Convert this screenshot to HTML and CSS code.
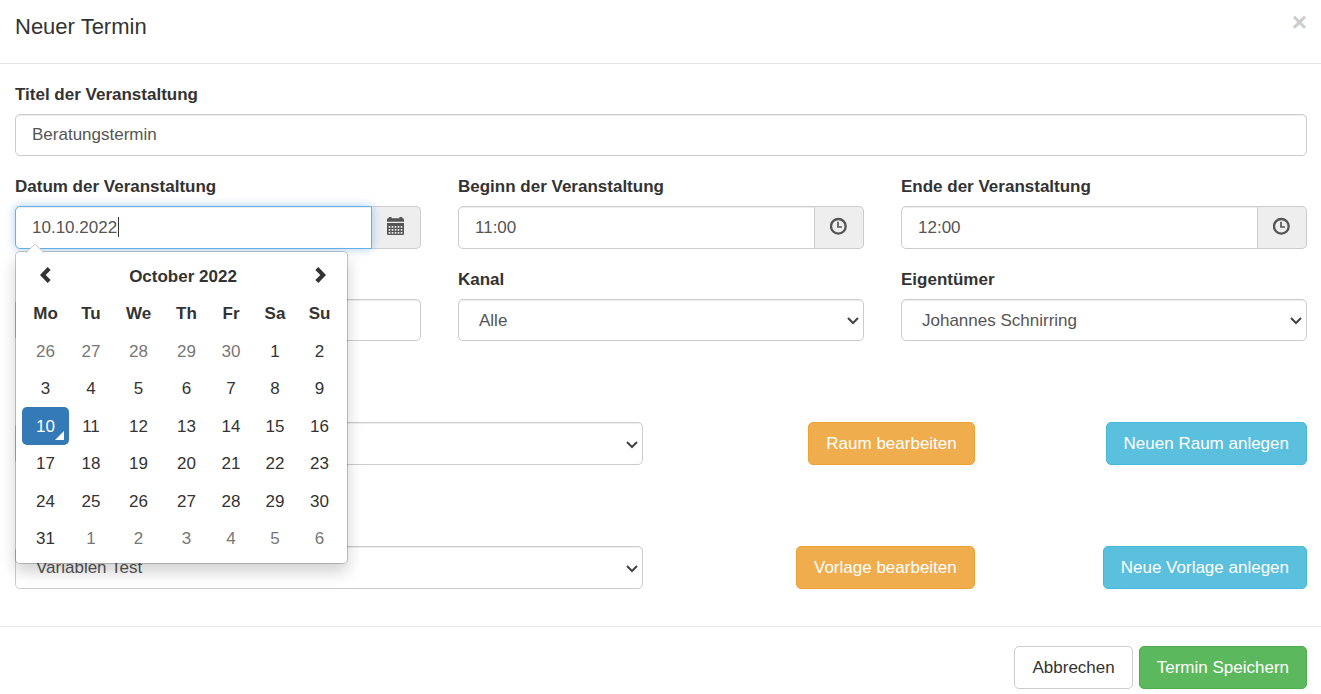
FILE: index.html
```html
<!DOCTYPE html>
<html lang="de">
<head>
<meta charset="utf-8">
<meta name="viewport" content="width=device-width, initial-scale=1">
<title>Neuer Termin</title>
<link rel="stylesheet" href="styles.css">
</head>
<body>
<form class="modal">
  <header class="modal-header">
    <h1 class="modal-title">Neuer Termin</h1>
    <button type="button" class="close" aria-label="Schließen">×</button>
  </header>

  <main class="modal-body">
    <div class="field">
      <label class="label" for="title">Titel der Veranstaltung</label>
      <input class="control" id="title" type="text" value="Beratungstermin">
    </div>

    <div class="row-thirds">
      <div class="field">
        <label class="label" for="date">Datum der Veranstaltung</label>
        <div class="input-group">
          <input class="control control-focus" id="date" type="text" value="10.10.2022">
          <span class="caret"></span>
          <button type="button" class="addon" aria-label="Kalender öffnen">
            <svg class="icon" viewBox="0 0 51 54" aria-hidden="true">
              <path fill="currentColor" fill-rule="evenodd" d="M7 0h5q2 0 2 2v2h23V2q0-2 2-2h5q2 0 2 2v2h1q4 0 4 4v6H0V8q0-4 4-4h1V2q0-2 2-2zM0 18h51v33q0 3-3 3H3q-3 0-3-3zM5 27v5h5v-5zM14 27v5h5v-5zM23 27v5h5v-5zM32 27v5h5v-5zM41 27v5h5v-5zM5 36v5h5v-5zM14 36v5h5v-5zM23 36v5h5v-5zM32 36v5h5v-5zM41 36v5h5v-5zM5 45v5h5v-5zM14 45v5h5v-5zM23 45v5h5v-5zM32 45v5h5v-5zM41 45v5h5v-5z"/>
            </svg>
          </button>

          <div class="datepicker">
            <table class="calendar">
              <colgroup>
                <col class="c-mo"><col class="c-tu"><col class="c-we"><col class="c-th"><col class="c-fr"><col class="c-sa"><col class="c-su">
              </colgroup>
              <tbody>
                <tr>
                  <th><button type="button" class="day" aria-label="Previous Month"><svg class="chevron" viewBox="0 0 36 48" aria-hidden="true"><path fill="currentColor" d="M23 0l9 9-15 15 15 15-9 9L0 24z"/></svg></button></th>
                  <th colspan="5"><button type="button" class="day month">October 2022</button></th>
                  <th><button type="button" class="day" aria-label="Next Month"><svg class="chevron" viewBox="0 0 36 48" aria-hidden="true"><path fill="currentColor" d="M13 0L4 9l15 15L4 39l9 9 23-24z"/></svg></button></th>
                </tr>
                <tr><th>Mo</th><th>Tu</th><th>We</th><th>Th</th><th>Fr</th><th>Sa</th><th>Su</th></tr>
                <tr>
                  <td><button type="button" class="day muted">26</button></td><td><button type="button" class="day muted">27</button></td><td><button type="button" class="day muted">28</button></td><td><button type="button" class="day muted">29</button></td><td><button type="button" class="day muted">30</button></td><td><button type="button" class="day">1</button></td><td><button type="button" class="day">2</button></td>
                </tr>
                <tr>
                  <td><button type="button" class="day">3</button></td><td><button type="button" class="day">4</button></td><td><button type="button" class="day">5</button></td><td><button type="button" class="day">6</button></td><td><button type="button" class="day">7</button></td><td><button type="button" class="day">8</button></td><td><button type="button" class="day">9</button></td>
                </tr>
                <tr>
                  <td><button type="button" class="day active">10</button></td><td><button type="button" class="day">11</button></td><td><button type="button" class="day">12</button></td><td><button type="button" class="day">13</button></td><td><button type="button" class="day">14</button></td><td><button type="button" class="day">15</button></td><td><button type="button" class="day">16</button></td>
                </tr>
                <tr>
                  <td><button type="button" class="day">17</button></td><td><button type="button" class="day">18</button></td><td><button type="button" class="day">19</button></td><td><button type="button" class="day">20</button></td><td><button type="button" class="day">21</button></td><td><button type="button" class="day">22</button></td><td><button type="button" class="day">23</button></td>
                </tr>
                <tr>
                  <td><button type="button" class="day">24</button></td><td><button type="button" class="day">25</button></td><td><button type="button" class="day">26</button></td><td><button type="button" class="day">27</button></td><td><button type="button" class="day">28</button></td><td><button type="button" class="day">29</button></td><td><button type="button" class="day">30</button></td>
                </tr>
                <tr>
                  <td><button type="button" class="day">31</button></td><td><button type="button" class="day muted">1</button></td><td><button type="button" class="day muted">2</button></td><td><button type="button" class="day muted">3</button></td><td><button type="button" class="day muted">4</button></td><td><button type="button" class="day muted">5</button></td><td><button type="button" class="day muted">6</button></td>
                </tr>
              </tbody>
            </table>
          </div>
        </div>
      </div>
      <div class="field">
        <label class="label" for="start">Beginn der Veranstaltung</label>
        <div class="input-group">
          <input class="control" id="start" type="text" value="11:00">
          <button type="button" class="addon" aria-label="Uhrzeit wählen">
            <svg class="icon" viewBox="0 0 51 54" aria-hidden="true"><g fill="none" stroke="currentColor"><circle cx="25" cy="28" r="22" stroke-width="7"/><path stroke-width="5" d="M24 14v16h12"/></g></svg>
          </button>
        </div>
      </div>
      <div class="field">
        <label class="label" for="end">Ende der Veranstaltung</label>
        <div class="input-group">
          <input class="control" id="end" type="text" value="12:00">
          <button type="button" class="addon" aria-label="Uhrzeit wählen">
            <svg class="icon" viewBox="0 0 51 54" aria-hidden="true"><g fill="none" stroke="currentColor"><circle cx="25" cy="28" r="22" stroke-width="7"/><path stroke-width="5" d="M24 14v16h12"/></g></svg>
          </button>
        </div>
      </div>
    </div>

    <div class="row-thirds">
      <div class="field field-end">
        <input class="control" type="text" aria-label="Angabe">
      </div>
      <div class="field">
        <label class="label" for="channel">Kanal</label>
        <select class="control select" id="channel"><option>Alle</option></select>
      </div>
      <div class="field">
        <label class="label" for="owner">Eigentümer</label>
        <select class="control select" id="owner"><option>Johannes Schnirring</option></select>
      </div>
    </div>

    <div class="row-actions">
      <select class="control select wide" aria-label="Raum"><option></option></select>
      <div class="action"><button type="button" class="btn btn-warning">Raum bearbeiten</button></div>
      <div class="action"><button type="button" class="btn btn-info">Neuen Raum anlegen</button></div>
    </div>

    <div class="row-actions">
      <select class="control select wide" aria-label="Vorlage"><option>Variablen Test</option></select>
      <div class="action"><button type="button" class="btn btn-warning">Vorlage bearbeiten</button></div>
      <div class="action"><button type="button" class="btn btn-info">Neue Vorlage anlegen</button></div>
    </div>
  </main>

  <footer class="modal-footer">
    <button type="button" class="btn btn-default">Abbrechen</button>
    <button type="submit" class="btn btn-success">Termin Speichern</button>
  </footer>
</form>
</body>
</html>
```

FILE: styles.css
```css
* {
  box-sizing: border-box;
}

body {
  margin: 0;
  background: #fff;
  color: #333;
  font-family: "Liberation Sans", Arial, sans-serif;
  font-size: 17px;
  line-height: 25px;
}

button,
input,
select {
  margin: 0;
  font: inherit;
}

.modal-header {
  display: flex;
  justify-content: space-between;
  align-items: flex-start;
  padding: 9px 14px 19px 15px;
  border-bottom: 1px solid #e5e5e5;
}

.modal-title {
  margin: 0;
  font-size: 22px;
  font-weight: 400;
  line-height: 35px;
}

.close {
  padding: 0;
  border: 0;
  background: none;
  color: #ccc;
  font-size: 26px;
  font-weight: 700;
  line-height: 26px;
}

.modal-body {
  display: flex;
  flex-direction: column;
  gap: 18px;
  padding: 18px 14px 37px 15px;
}

.row-thirds {
  display: grid;
  grid-template-columns: repeat(3, minmax(0, 1fr));
  gap: 37px;
}

.row-actions {
  display: grid;
  grid-template-columns: repeat(12, minmax(0, 1fr));
  column-gap: 37px;
  padding-top: 63px;
}

.wide {
  grid-column: span 6;
}

.action {
  display: flex;
  grid-column: span 3;
  justify-content: flex-end;
}

.field {
  display: flex;
  flex-direction: column;
  gap: 7px;
}

.field-end {
  justify-content: flex-end;
}

.label {
  font-weight: 700;
}

.control {
  width: 100%;
  min-width: 0;
  height: 42px;
  padding: 0 16px;
  border: 1px solid #ccc;
  border-radius: 5px;
  outline: 0;
  background-color: #fff;
  box-shadow: inset 0 1px 1px rgba(0, 0, 0, 0.075);
  color: #555;
}

.select {
  appearance: none;
  padding: 0 20px;
  background-image: url("data:image/svg+xml,%3Csvg xmlns='http://www.w3.org/2000/svg' viewBox='0 0 12 10'%3E%3Cpath d='M1 3l5 5 5-5' fill='none' stroke='%23444' stroke-width='2'/%3E%3C/svg%3E");
  background-position: right 4px center;
  background-repeat: no-repeat;
  background-size: 12px 10px;
}

.row-actions .control,
.input-group .control {
  height: 43px;
}

.input-group {
  position: relative;
  display: flex;
}

.input-group .control {
  flex: 1;
  border-radius: 5px 0 0 5px;
}

.input-group .control-focus {
  position: relative;
  z-index: 1;
  border-color: #66afe9;
  box-shadow: inset 0 1px 1px rgba(0, 0, 0, 0.075), 0 0 10px rgba(102, 175, 233, 0.6);
}

.caret {
  position: absolute;
  z-index: 2;
  top: 11px;
  left: 103px;
  width: 1px;
  height: 20px;
  background: #333;
}

.addon {
  display: flex;
  justify-content: center;
  align-items: center;
  width: 49px;
  padding: 0 1px 3px 0;
  border: 1px solid #ccc;
  border-left: 0;
  border-radius: 0 5px 5px 0;
  background: #eee;
  color: #555;
}

.icon {
  width: 17px;
  height: 18px;
}

.datepicker {
  position: absolute;
  z-index: 10;
  top: 45px;
  left: 0;
  padding: 5px 5px 6px 6px;
  border: 1px solid #ccc;
  border-color: rgba(0, 0, 0, 0.2);
  border-radius: 5px;
  background: #fff;
  background-clip: padding-box;
  box-shadow: 0 8px 15px rgba(0, 0, 0, 0.175);
}

.datepicker::before {
  content: "";
  position: absolute;
  top: -6px;
  left: 12px;
  width: 12px;
  height: 12px;
  border: 1px solid #ccc;
  background: #fff;
  clip-path: polygon(0 0, 100% 0, 0 100%);
  transform: rotate(45deg);
}

.calendar {
  width: 320px;
  border-collapse: collapse;
  table-layout: fixed;
  text-align: center;
}

.calendar tr {
  height: 37px;
}

.calendar tr:nth-child(odd) {
  height: 38px;
}

.calendar th,
.calendar td {
  height: inherit;
  padding: 0;
}

.c-mo {
  width: 47px;
}

.c-tu,
.c-fr,
.c-sa {
  width: 44px;
}

.c-we {
  width: 51px;
}

.c-th,
.c-su {
  width: 45px;
}

.day {
  position: relative;
  display: block;
  width: 100%;
  height: 100%;
  padding: 0;
  border: 0;
  border-radius: 5px;
  background: none;
  color: #333;
}

.month {
  font-weight: 700;
}

.muted {
  color: #777;
}

.active {
  background: #337ab7;
  color: #fff;
}

.active::after {
  content: "";
  position: absolute;
  right: 5px;
  bottom: 5px;
  border: solid transparent;
  border-width: 0 0 9px 9px;
  border-bottom-color: #fff;
}

.chevron {
  display: block;
  width: 12px;
  height: 16px;
  margin: 0 auto 2px;
}

.btn {
  height: 43px;
  padding: 0 17px;
  border: 1px solid;
  border-radius: 5px;
  color: #fff;
  white-space: nowrap;
}

.btn-default {
  border-color: #ccc;
  background: #fff;
  color: #333;
}

.btn-warning {
  border-color: #eea236;
  background: #f0ad4e;
}

.btn-info {
  border-color: #46b8da;
  background: #5bc0de;
}

.btn-success {
  border-color: #4cae4c;
  background: #5cb85c;
}

.modal-footer {
  display: flex;
  justify-content: flex-end;
  gap: 6px;
  padding: 19px 14px 5px;
  border-top: 1px solid #e5e5e5;
}
```
